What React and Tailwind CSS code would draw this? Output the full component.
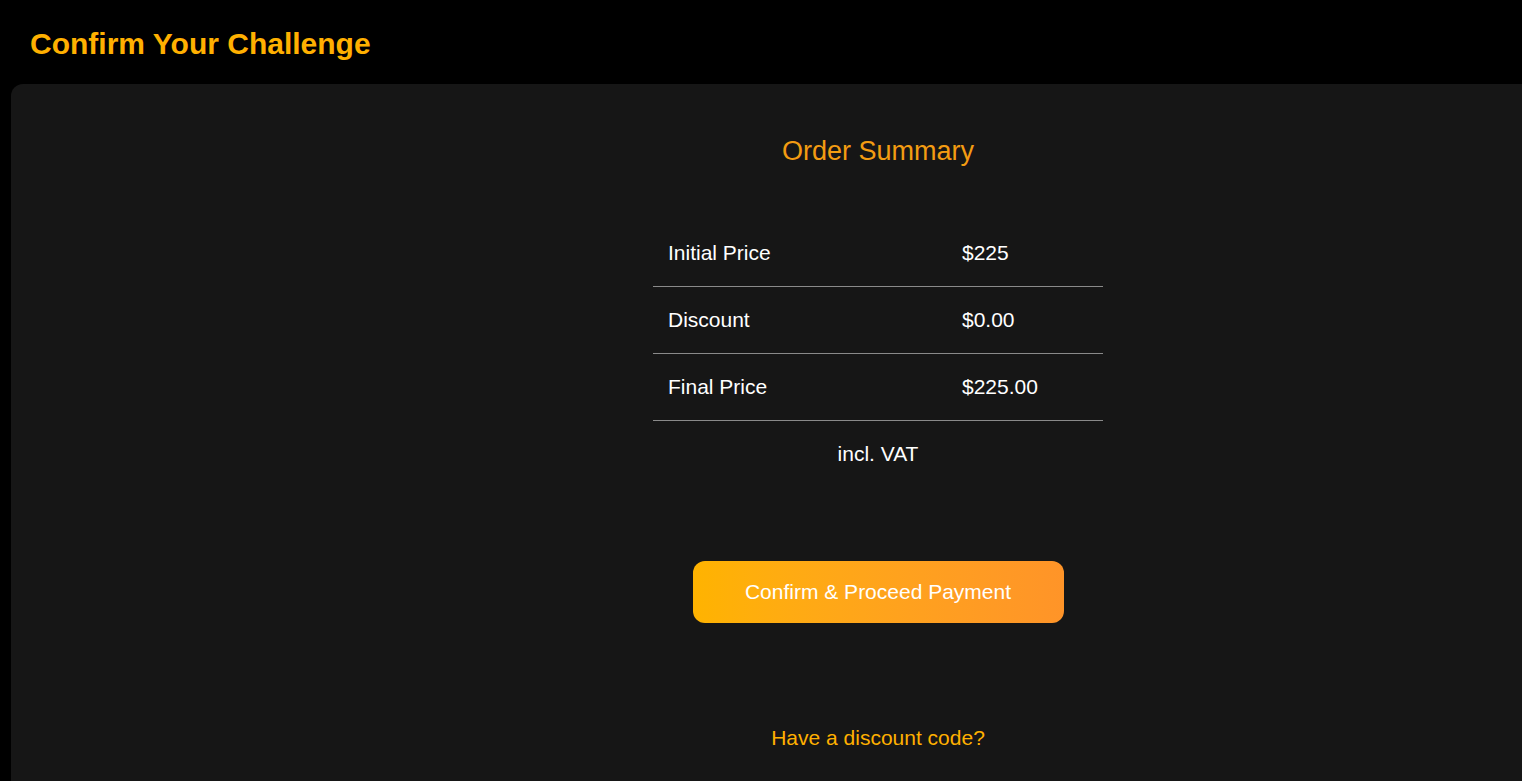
const rows = [
    { label: 'Initial Price', value: '$225' },
    { label: 'Discount', value: '$0.00' },
    { label: 'Final Price', value: '$225.00' },
];

const App = () => {
    return (
        <div className="min-h-screen h-[781px] bg-black overflow-hidden font-['Liberation_Sans',Arial,sans-serif]">
            <header className="h-[84px] flex items-center pl-[30px] pt-[3px]">
                <h1 className="text-[30px] font-bold text-[#ffb000] leading-none">Confirm Your Challenge</h1>
            </header>

            <main className="ml-[11px] w-[1734px] h-[697px] bg-[#161616] rounded-tl-xl flex flex-col items-center">
                <h2 className="mt-[54px] text-[27px] text-[#f39c12] leading-none">Order Summary</h2>

                <table className="mt-[54px] w-[450px] text-white text-[21px]">
                    <tbody>
                        {rows.map((row) => (
                            <tr key={row.label} className="border-b border-[#8a8a8a] h-[67px]">
                                <td className="pl-[15px] w-[309px]">{row.label}</td>
                                <td>{row.value}</td>
                            </tr>
                        ))}
                        <tr className="h-[67px]">
                            <td colSpan={2} className="text-center">incl. VAT</td>
                        </tr>
                    </tbody>
                </table>

                <button
                    type="button"
                    className="mt-[74px] w-[371px] h-[62px] rounded-xl bg-gradient-to-r from-[#ffb300] to-[#ff9428] text-white text-[21px]"
                >
                    Confirm &amp; Proceed Payment
                </button>

                <a href="#" className="mt-[99px] text-[21px] text-[#ffb000]">Have a discount code?</a>
            </main>
        </div>
    );
};

export default App;
